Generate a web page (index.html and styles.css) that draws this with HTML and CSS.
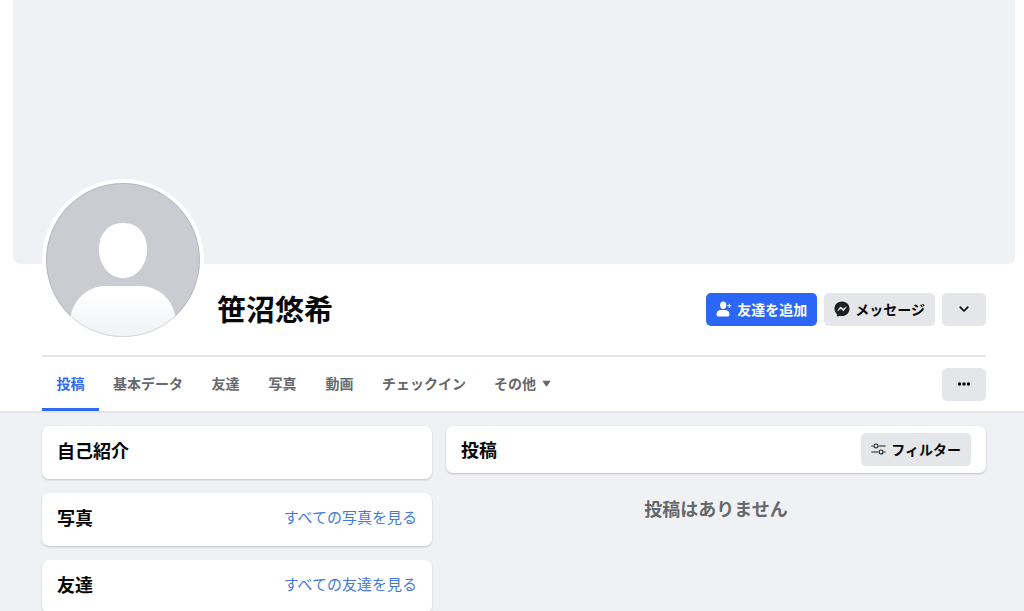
FILE: index.html
```html
<!DOCTYPE html>
<html lang="ja">
<head>
    <meta charset="UTF-8">
    <meta name="viewport" content="width=device-width, initial-scale=1.0">
    <title>笹沼悠希</title>
    <link rel="stylesheet" href="styles.css">
</head>
<body>
    <header class="profileHeader">
        <div class="cover"></div>

        <div class="profileInfo">
            <svg class="avatar" viewBox="0 0 162 162" aria-hidden="true">
                <defs>
                    <linearGradient id="bodyFill" x1="0" y1="0" x2="0" y2="1">
                        <stop offset="0.15" stop-color="#ffffff"/>
                        <stop offset="1" stop-color="#eef0f4"/>
                    </linearGradient>
                    <clipPath id="avatarClip"><circle cx="81" cy="81" r="77"/></clipPath>
                </defs>
                <circle cx="81" cy="81" r="81" fill="#fff"/>
                <g clip-path="url(#avatarClip)">
                    <rect width="162" height="162" fill="#cbccd1"/>
                    <path d="M81 44C96 44 105 55 105 70C105 86 95 99 81 99C67 99 57 86 57 70C57 55 66 44 81 44Z" fill="#fff"/>
                    <path d="M28 142C30 120 46 107 64 107H98C116 107 132 120 134 142V162H28Z" fill="url(#bodyFill)"/>
                </g>
                <circle cx="81" cy="81" r="76.5" fill="none" stroke="#000" stroke-opacity="0.1"/>
            </svg>
            <h1 class="profileName">笹沼悠希</h1>
            <div class="actions">
                <button type="button" class="btn btnPrimary">
                    <svg width="16" height="16" viewBox="0 0 16 16" fill="currentColor" aria-hidden="true">
                        <ellipse cx="7.200" cy="4.200" rx="3.100" ry="3.700"/>
                        <path d="M.5 13.200C.5 10.600 2.500 9 4.800 9H9.200C11.500 9 13.500 10.600 13.500 13.200C13.500 14.800 12.600 15.500 11.500 15.500H2.500C1.400 15.500.5 14.800.5 13.200Z"/>
                        <path d="M13.300 3.200V6.400M11.700 4.800H14.900" stroke="currentColor" stroke-width="1" stroke-linecap="round"/>
                    </svg>
                    友達を追加
                </button>
                <button type="button" class="btn">
                    <svg width="16" height="16" viewBox="0 0 16 16" aria-hidden="true">
                        <path d="M8 .5C3.700.5.5 3.600.5 7.700C.5 9.900 1.400 11.800 2.900 13.100V15C2.900 15.500 3.300 15.700 3.800 15.500L5.500 14.700C6.300 14.900 7.100 15 8 15C12.300 15 15.500 11.800 15.500 7.700C15.500 3.600 12.300.5 8 .5Z" fill="#1c1e21"/>
                        <path d="M3.600 9.800L5.900 6.300Q6.600 5.600 7.300 6.200L8.700 7.500Q9.200 7.900 9.700 7.500L12.400 5.700L10.100 9.300Q9.400 10 8.700 9.400L7.300 8.100Q6.800 7.700 6.300 8.100Z" fill="#e4e6ea" stroke="#e4e6ea" stroke-width=".5"/>
                    </svg>
                    メッセージ
                </button>
                <button type="button" class="btn btnIcon" aria-label="その他のオプション">
                    <svg width="14" height="14" viewBox="0 0 14 14" fill="none" stroke="currentColor" stroke-width="1.700" stroke-linecap="round" stroke-linejoin="round" aria-hidden="true">
                        <path d="M3.200 5.200L7 9L10.800 5.200"/>
                    </svg>
                </button>
            </div>
        </div>

        <div class="tabBar">
            <nav class="tabs">
                <a href="#" class="tab active" aria-current="page">投稿</a>
                <a href="#" class="tab">基本データ</a>
                <a href="#" class="tab">友達</a>
                <a href="#" class="tab">写真</a>
                <a href="#" class="tab">動画</a>
                <a href="#" class="tab">チェックイン</a>
                <a href="#" class="tab">その他
                    <svg width="9" height="7" viewBox="0 0 9 7" fill="currentColor" aria-hidden="true"><path d="M1.200.8H7.800Q8.500.9 8.200 1.500L5.200 5.900Q4.500 6.600 3.800 5.900L.8 1.500Q.5.9 1.200.8Z"/></svg>
                </a>
            </nav>
            <button type="button" class="btn btnIcon" aria-label="メニュー">
                <svg width="14" height="14" viewBox="0 0 14 14" fill="currentColor" aria-hidden="true">
                    <circle cx="2.600" cy="7" r="1.700"/><circle cx="7" cy="7" r="1.700"/><circle cx="11.400" cy="7" r="1.700"/>
                </svg>
            </button>
        </div>
    </header>

    <main class="content">
        <div class="column">
            <section class="card">
                <h2>自己紹介</h2>
            </section>
            <section class="card">
                <h2>写真</h2>
                <a href="#" class="seeAll">すべての写真を見る</a>
            </section>
            <section class="card">
                <h2>友達</h2>
                <a href="#" class="seeAll">すべての友達を見る</a>
            </section>
        </div>
        <div class="column">
            <section class="card postsCard">
                <h2>投稿</h2>
                <button type="button" class="btn">
                    <svg width="15" height="14" viewBox="0 0 15 14" fill="none" stroke="#1c1e21" stroke-width="1.200" stroke-linecap="round" aria-hidden="true">
                        <path d="M.8 4H1.500M8.500 4H14.200M.8 10H6.500M13.500 10H14.200"/>
                        <circle cx="5" cy="4" r="2"/>
                        <circle cx="10" cy="10" r="2"/>
                    </svg>
                    フィルター
                </button>
            </section>
            <p class="emptyText">投稿はありません</p>
        </div>
    </main>
</body>
</html>
```
FILE: styles.css
```css
* {
    box-sizing: border-box;
}
body {
    margin: 0;
    background: #f0f1f5;
    color: #080809;
    font-family: "Noto Sans CJK JP", sans-serif;
}
h1, h2, p {
    margin: 0;
}
a {
    text-decoration: none;
}

/* ヘッダー */
.profileHeader {
    padding: 0 9px 0 13px;
    background: #fff;
    border-bottom: 2px solid #e3e5e8;
}
.cover {
    height: 264px;
    background: #f0f1f5;
    border-radius: 0 0 7px 7px;
}
.profileInfo {
    display: flex;
    align-items: center;
    height: 91px;
    margin: 0 29px;
}
/* カバー画像に重ねて表示 */
.avatar {
    position: relative;
    flex: none;
    width: 162px;
    height: 162px;
    margin: -100px 13px 0 0;
}
.profileName {
    padding-bottom: 4px;
    font-size: 29px;
    line-height: 36px;
}
.actions {
    display: flex;
    gap: 7px;
    margin-left: auto;
}

.btn {
    display: flex;
    align-items: center;
    justify-content: center;
    gap: 5px;
    height: 33px;
    padding: 0 10px 1px;
    border: 0;
    border-radius: 5px;
    background: #e4e6ea;
    color: #080809;
    font: bold 14px/20px "Noto Sans CJK JP", sans-serif;
    white-space: nowrap;
    cursor: pointer;
}
.btnPrimary {
    background: #2b66f6;
    color: #fff;
}
.btnIcon {
    width: 44px;
}

/* タブ */
.tabBar {
    display: flex;
    align-items: center;
    justify-content: space-between;
    margin: 0 29px;
    border-top: 2px solid #e3e5e8;
}
.tabs {
    display: flex;
}
.tab {
    display: flex;
    align-items: center;
    justify-content: center;
    gap: 6px;
    min-width: 57px;
    height: 54px;
    padding: 1px 14px 0;
    border-bottom: 3px solid transparent;
    color: #65686c;
    font-size: 14px;
    font-weight: bold;
    line-height: 20px;
}
.tab.active {
    color: #2f69f6;
    border-bottom-color: #2f69f6;
}

/* コンテンツ */
.content {
    display: grid;
    grid-template-columns: 13fr 18fr;
    gap: 14px;
    padding: 13px 38px 0 42px;
}
.column {
    display: flex;
    flex-direction: column;
    gap: 14px;
}
.card {
    display: flex;
    justify-content: space-between;
    align-items: flex-start;
    padding: 11px 15px 16px;
    border-radius: 7px;
    background: #fff;
    box-shadow: 0 1px 2px rgba(0, 0, 0, 0.2);
}
.card h2 {
    font-size: 18px;
    line-height: 26px;
}
.seeAll {
    color: #4478d8;
    font-size: 15px;
    line-height: 26px;
}
.postsCard {
    padding: 7px 15px;
}
.postsCard h2 {
    line-height: 32px;
}
.emptyText {
    padding-top: 8px;
    color: #65686c;
    font-size: 18px;
    font-weight: bold;
    line-height: 26px;
    text-align: center;
}
```
